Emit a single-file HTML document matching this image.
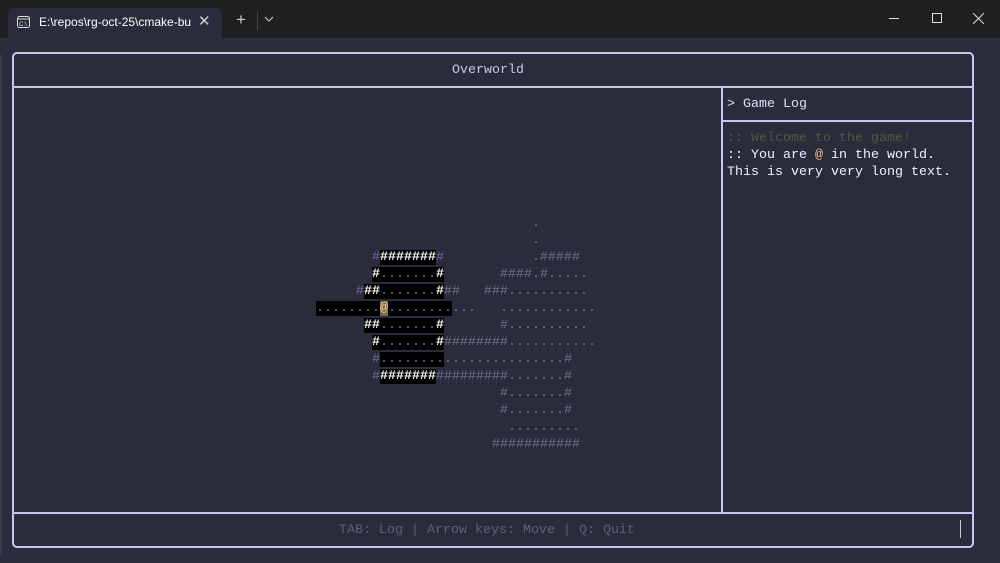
<!DOCTYPE html>
<html><head><meta charset="utf-8"><style>
*{margin:0;padding:0;box-sizing:border-box}
body{width:1000px;height:563px;background:#2a2b3b;overflow:hidden;position:relative;font-family:"Liberation Mono",monospace;}
.tb{position:absolute;left:0;top:0;width:1000px;height:38px;background:#1f1f1f;}
.tab{position:absolute;left:8px;top:8px;width:214px;height:30px;background:#2a2b3b;border-radius:6px 6px 0 0;}
.tab span{position:absolute;left:31px;top:7px;font:12px "Liberation Sans",sans-serif;color:#fff}
.a{position:absolute;color:#c8c8c8;font-family:"Liberation Sans",sans-serif}
.box{position:absolute;border:2px solid #c5c9ef;}
.t{position:absolute;font-size:13.33px;white-space:pre;line-height:17px;}
.r{position:absolute;left:316px;font-size:13.33px;white-space:pre;line-height:17px;color:#6e7290}
.b{background:#000}
.w{color:#fff;font-weight:bold}
.g{background:#7a6a48;color:#f0d090}
</style></head><body>
<div class="tb"></div>
<div class="tab"><svg style="position:absolute;left:9px;top:8px" width="13" height="12"><rect x="0.5" y="0.5" width="12" height="11" rx="2" fill="none" stroke="#ddd"/><line x1="0.5" y1="3" x2="12.5" y2="3" stroke="#ddd"/><text x="2" y="10" font-size="6" fill="#ddd" font-family="Liberation Sans">C:\</text></svg><span>E:\repos\rg-oct-25\cmake-bu</span><span style="left:190px;top:4px;font-size:15px;color:#ccc">✕</span></div>
<div class="a" style="left:236px;top:10px;font-size:17px">+</div>
<div style="position:absolute;left:257px;top:12px;width:1px;height:18px;background:#444"></div>
<svg style="position:absolute;left:264px;top:16px" width="10" height="6"><path d="M1 1L5 5L9 1" stroke="#ccc" fill="none"/></svg>
<div style="position:absolute;left:889px;top:18px;width:10px;height:1px;background:#ddd"></div>
<div style="position:absolute;left:932px;top:13px;width:10px;height:10px;border:1px solid #ddd"></div>
<svg style="position:absolute;left:973px;top:13px" width="11" height="11"><path d="M0 0L11 11M11 0L0 11" stroke="#ddd"/></svg>
<div style="position:absolute;left:0;top:55px;width:2px;height:500px;background:#3a3b4b"></div>

<div class="box" style="left:12px;top:52px;width:962px;height:496px;border-radius:5px"></div>
<div style="position:absolute;left:12px;top:86px;width:962px;height:2px;background:#c5c9ef"></div>
<div style="position:absolute;left:12px;top:512px;width:962px;height:2px;background:#c5c9ef"></div>
<div style="position:absolute;left:721px;top:86px;width:2px;height:427px;background:#c5c9ef"></div>
<div style="position:absolute;left:721px;top:120px;width:253px;height:2px;background:#c5c9ef"></div>
<div class="t" style="left:452px;top:62px;color:#c5c9ef">Overworld</div>
<div class="t" style="left:727px;top:96px;color:#dde0f8">&gt; Game Log</div>
<div class="t" style="left:727px;top:130px;color:#4e5a3c">:: Welcome to the game!</div>
<div class="t" style="left:727px;top:147px;color:#eef0ff">:: You are <span style="color:#e8c080">@</span> in the world.</div>
<div class="t" style="left:727px;top:164px;color:#eef0ff">This is very very long text.</div>
<div class="t" style="left:339px;top:522px;color:#5c6078">TAB: Log | Arrow keys: Move | Q: Quit</div>
<div style="position:absolute;left:960px;top:520px;width:1px;height:18px;background:#ccc"></div>

<div class="r" style="top:215px">                           .</div>
<div class="r" style="top:232px">                           .</div>
<div class="r" style="top:249px">       #<span class="b w">#######</span>#           .#####</div>
<div class="r" style="top:266px">       <span class="b"><span class="w">#</span>.......<span class="w">#</span></span>       ####.#.....</div>
<div class="r" style="top:283px">     #<span class="b"><span class="w">##</span>.......<span class="w">#</span></span>##   ###..........</div>
<div class="r" style="top:300px"><span class="b">........<span class="g">@</span>........</span>...   ............</div>
<div class="r" style="top:317px">      <span class="b"><span class="w">##</span>.......<span class="w">#</span></span>       #..........</div>
<div class="r" style="top:334px">       <span class="b"><span class="w">#</span>.......<span class="w">#</span></span>########...........</div>
<div class="r" style="top:351px">       #<span class="b">........</span>...............#</div>
<div class="r" style="top:368px">       #<span class="b w">#######</span>#########.......#</div>
<div class="r" style="top:385px">                       #.......#</div>
<div class="r" style="top:402px">                       #.......#</div>
<div class="r" style="top:419px">                        .........</div>
<div class="r" style="top:436px">                      ###########</div>
</body></html>
